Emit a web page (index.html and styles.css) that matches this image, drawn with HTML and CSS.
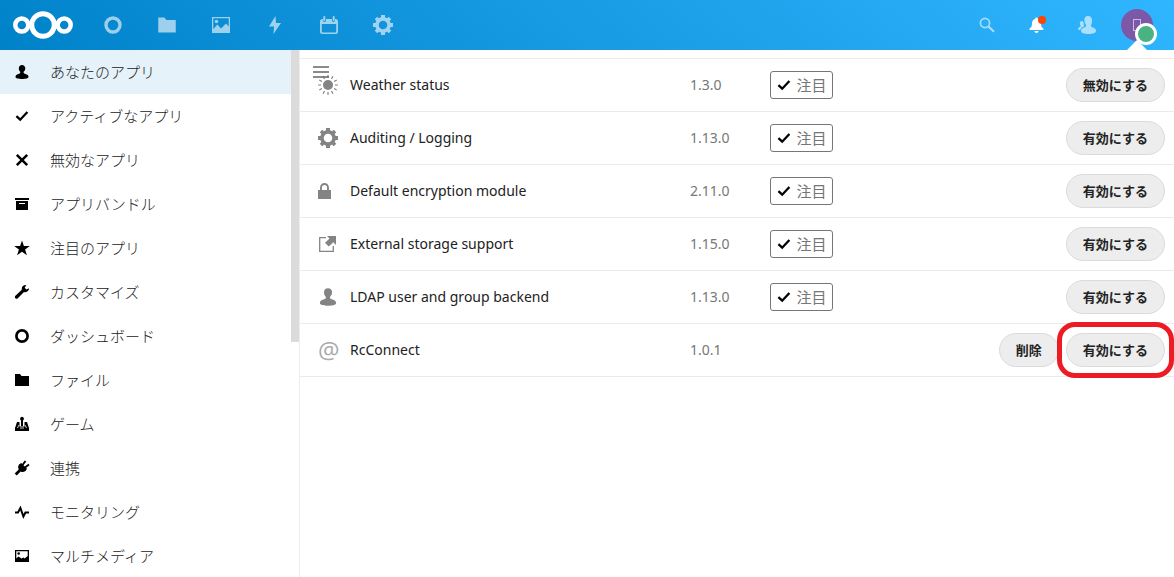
FILE: index.html
```html
<!DOCTYPE html>
<html lang="ja">
<head>
<meta charset="utf-8">
<title>アプリ</title>
<meta name="viewport" content="width=device-width, initial-scale=1">
<link rel="stylesheet" href="styles.css">
</head>
<body>
<svg class="sprite" aria-hidden="true">
  <symbol id="user" viewBox="0 0 16 16"><path d="M8 1C6.100 1 4.800 2.300 4.800 4.200c0 1.600.5 2.500 1.300 3.400.3.500.2 1.100.1 1.400-.3.500-1.400.8-2.500 1.200C2.300 10.700 1.500 11.500 1.500 13c0 1.300 3 2 6.500 2s6.500-.7 6.500-2c0-1.500-.8-2.300-2.300-2.800-1.100-.4-2.200-.7-2.500-1.200-.1-.3-.2-.9.1-1.400.8-.9 1.500-1.800 1.500-3.400C11.200 2.300 9.900 1 8 1z"/></symbol>
  <symbol id="check" viewBox="0 0 16 16"><path d="M2.400 8.200 6.200 11.700 13.400 4" fill="none" stroke="currentColor" stroke-width="2.300"/></symbol>
  <symbol id="close" viewBox="0 0 16 16"><path d="M2.800 2.800 13.200 13.200M13.200 2.800 2.800 13.200" fill="none" stroke="currentColor" stroke-width="2.500"/></symbol>
  <symbol id="bundle" viewBox="0 0 16 16"><path fill-rule="evenodd" d="M1 2h14v2H1zM2 5h12v9H2zM5 7v1h6V7z"/></symbol>
  <symbol id="star" viewBox="0 0 16 16"><path d="M8 .5 9.900 6h5.900l-4.700 3.500 1.800 5.700L8 11.700l-4.900 3.500 1.800-5.700L.2 6h5.900z"/></symbol>
  <symbol id="wrench" viewBox="0 0 16 16"><path d="M12.300 1C9.400.8 7.200 3 7.800 5.800L1.400 11.800c-1.600 1.600.8 4.100 2.400 2.500l6.200-6.300c2.600.8 5.200-1 5.100-3.800l-2.600 1.300-1.800-1.700z"/></symbol>
  <symbol id="ring" viewBox="0 0 16 16"><circle cx="8" cy="8" r="5.600" fill="none" stroke="currentColor" stroke-width="2.700"/></symbol>
  <symbol id="folder" viewBox="0 0 16 16"><path d="M1 2h5l1.500 2H15v10H1z"/></symbol>
  <symbol id="game" viewBox="0 0 16 16"><path d="M8 .8a2 2 0 0 0-1 3.700V10h2V4.500A2 2 0 0 0 8 .8zM3 6h2.500v4.500h5V6H13l2 6v3H1v-3z"/><path d="M3.500 12 5 9M12.500 12 11 9M6 12h4" fill="none" stroke="#fff" stroke-width=".8"/></symbol>
  <symbol id="plug" viewBox="0 0 16 16"><path d="M5 4.500 7.200 3l5.800 5.800-1.500 2.200c-1.700 1.200-3.300 1.400-4.800.5l-4 4-2-2 4-4C3.900 7.500 4 6 5 4.500z"/><path d="M8.500 5l3-4M11 7.500l4-3" stroke="currentColor" stroke-width="1.900"/></symbol>
  <symbol id="pulse" viewBox="0 0 16 16"><path d="M1 8.500h3L6.400 4l3 8.500 2-4H15" fill="none" stroke="currentColor" stroke-width="2"/></symbol>
  <symbol id="picture" viewBox="0 0 16 16"><path fill-rule="evenodd" d="M1 2h14v12H1zM2.300 3.300v7.200l2-2 3.300 2 2-1 1 1L13.700 8V3.300z"/><circle cx="4.700" cy="5.500" r="1.300"/></symbol>
  <symbol id="photo" viewBox="0 0 18 16"><path fill-rule="evenodd" d="M0 0h18v16H0zM1.300 1.300v11l4-4.800L9 11.500l5-5 2.700 3V1.300z"/><circle cx="4.500" cy="4.500" r="1.800"/></symbol>
  <symbol id="bolt" viewBox="0 0 16 20"><path d="M8.500 1 2 11.500h5L6.500 19 14 8H9z"/></symbol>
  <symbol id="calendar" viewBox="0 0 18 18"><path fill-rule="evenodd" d="M2.500 3H3v2q1.300 2 3 0V3h6v2q1.300 2 3 0V3h.5Q18 3 18 5.500v10q0 2.500-2.500 2.500h-13Q0 18 0 15.500v-10Q0 3 2.500 3zM1.800 8v7.500q0 1 1 1h12.400q1 0 1-1V8z"/><rect x="3.300" width="2" height="5" rx="1"/><rect x="12.700" width="2" height="5" rx="1"/></symbol>
  <symbol id="gear" viewBox="0 0 20 20"><circle cx="10" cy="10" r="6.100" fill="none" stroke="currentColor" stroke-width="3.600"/><path d="M8 0h4v3H8zM8 17h4v3H8zM0 8h3v4H0zM17 8h3v4h-3zM4.300 1.700 6.300 3.700 3.700 6.300 1.700 4.300zM15.700 1.700 18.300 4.300 16.300 6.300 13.700 3.700zM1.700 15.700 3.700 13.700 6.300 16.300 4.300 18.300zM18.300 15.700 16.300 13.700 13.700 16.300 15.700 18.300z"/></symbol>
  <symbol id="search" viewBox="0 0 16 16"><circle cx="6" cy="6" r="4.600" fill="none" stroke="currentColor" stroke-width="1.700"/><path d="m9.500 9.500 5.500 5.200" stroke="currentColor" stroke-width="2.200"/></symbol>
  <symbol id="bell" viewBox="0 0 16 16"><path d="M7.500.5c-.8 0-1.200.5-1.200 1.300C4 2.600 3 4.400 3 6.500c0 3-.8 4.100-2.500 5.200V13h14v-1.300C12.800 10.600 12 9.500 12 6.500c0-2.100-1-3.900-3.300-4.700 0-.8-.4-1.300-1.200-1.300zM5.300 14q.5 2 2.200 2t2.200-2z"/></symbol>
  <symbol id="contacts" viewBox="0 0 18 18"><path d="M10 0C7.700 0 6.400 1.500 6.400 4c0 2 .5 3.300 1.400 4.400.7 2-.2 2.500-1.600 3-1.900.6-3.200 1.500-3.200 3.600C3 16.700 6 18 10.500 18s7.500-1.300 7.500-3c0-2.100-1.300-3-3.200-3.600-1.400-.5-2.300-1-1.600-3C14 7.300 14 6 14 4c0-2.500-1.700-4-4-4z"/><path d="M3.700 5C2.400 5 1.800 6 1.800 7.300c0 1.500.8 2 .8 3C2.600 11.300 0 11.200 0 13c0 .8 1 1 2.300 1 .8-2.300 2-3 4-3.500-.8-1-.6-1.600-.4-2.200C6.100 6.300 5 5 3.700 5z"/></symbol>
  <symbol id="weather" viewBox="0 0 20 20"><circle cx="10" cy="10" r="5"/><path d="M10 0v3M10 17v3M0 10h3M17 10h3M5 1.300l1.500 2.600M13.500 16.100l1.500 2.600M1.300 5l2.600 1.500M16.100 13.500l2.600 1.500M15 1.300l-1.500 2.600M6.500 16.100 5 18.700M18.700 5l-2.600 1.500M3.900 13.500 1.300 15" stroke="currentColor" stroke-width="1.200"/></symbol>
  <symbol id="lock" viewBox="0 0 18 18"><path d="M3 9V5.500a3.500 3.500 0 0 1 7 0V9" fill="none" stroke="currentColor" stroke-width="1.900"/><path d="M0 8h13v9H0z"/></symbol>
  <symbol id="external" viewBox="0 0 18 18"><path d="M8 2.700H1.700v13.600h13.600V11" fill="none" stroke="currentColor" stroke-width="1.300"/><path d="M9 1h9v9l-2.700-2.700-4.600 4.200-3.700-3.700L11.500 3.500z"/></symbol>
</svg>

<header class="header">
  <nav class="apps" aria-label="アプリ">
    <a class="logo" href="#" aria-label="ホーム"><svg viewBox="0 0 60 28"><g fill="none" stroke="#fff"><circle cx="30" cy="14" r="11.300" stroke-width="5"/><circle cx="8.800" cy="14" r="6.500" stroke-width="4.500"/><circle cx="51.200" cy="14" r="6.500" stroke-width="4.500"/></g></svg></a>
    <a class="app" href="#" aria-label="ダッシュボード"><svg class="i20"><use href="#ring"/></svg></a>
    <a class="app" href="#" aria-label="ファイル"><svg class="i20"><use href="#folder"/></svg></a>
    <a class="app" href="#" aria-label="写真"><svg class="i18"><use href="#photo"/></svg></a>
    <a class="app" href="#" aria-label="アクティビティ"><svg class="i20"><use href="#bolt"/></svg></a>
    <a class="app" href="#" aria-label="カレンダー"><svg class="i18"><use href="#calendar"/></svg></a>
    <a class="app" href="#" aria-label="設定"><svg class="i20"><use href="#gear"/></svg></a>
  </nav>
  <div class="tools">
    <button class="tool dim" aria-label="検索"><svg class="i16"><use href="#search"/></svg></button>
    <button class="tool" aria-label="通知"><svg class="i16"><use href="#bell"/></svg><span class="badge"></span></button>
    <button class="tool dim" aria-label="連絡先"><svg class="i18"><use href="#contacts"/></svg></button>
    <button class="tool" aria-label="ユーザー"><span class="avatar"><span class="initial"></span></span><span class="caret"></span><span class="status"></span></button>
  </div>
</header>

<div class="content">
  <aside class="sidebar">
    <nav class="menu" aria-label="カテゴリ">
      <a class="item active" href="#"><svg class="i16"><use href="#user"/></svg>あなたのアプリ</a>
      <a class="item" href="#"><svg class="i16"><use href="#check"/></svg>アクティブなアプリ</a>
      <a class="item" href="#"><svg class="i16"><use href="#close"/></svg>無効なアプリ</a>
      <a class="item" href="#"><svg class="i16"><use href="#bundle"/></svg>アプリバンドル</a>
      <a class="item" href="#"><svg class="i16"><use href="#star"/></svg>注目のアプリ</a>
      <a class="item" href="#"><svg class="i16"><use href="#wrench"/></svg>カスタマイズ</a>
      <a class="item" href="#"><svg class="i16"><use href="#ring"/></svg>ダッシュボード</a>
      <a class="item" href="#"><svg class="i16"><use href="#folder"/></svg>ファイル</a>
      <a class="item" href="#"><svg class="i16"><use href="#game"/></svg>ゲーム</a>
      <a class="item" href="#"><svg class="i16"><use href="#plug"/></svg>連携</a>
      <a class="item" href="#"><svg class="i16"><use href="#pulse"/></svg>モニタリング</a>
      <a class="item" href="#"><svg class="i16"><use href="#picture"/></svg>マルチメディア</a>
    </nav>
    <div class="track"><div class="thumb"></div></div>
  </aside>
  <main class="main">
    <button class="toggle" aria-label="メニュー"><svg viewBox="0 0 16 12"><path d="M0 1h16M0 6h16M0 11h16" stroke="#666" stroke-width="1.500"/></svg></button>
    <table class="list">
      <tbody>
      <tr><td class="icon"><svg class="i20"><use href="#weather"/></svg></td><td class="name">Weather status</td><td class="version">1.3.0</td><td><span class="tag"><svg class="i16"><use href="#check"/></svg>注目</span></td><td class="actions"><button class="btn">無効にする</button></td></tr>
      <tr><td class="icon"><svg class="i20"><use href="#gear"/></svg></td><td class="name">Auditing / Logging</td><td class="version">1.13.0</td><td><span class="tag"><svg class="i16"><use href="#check"/></svg>注目</span></td><td class="actions"><button class="btn">有効にする</button></td></tr>
      <tr><td class="icon"><svg class="i18"><use href="#lock"/></svg></td><td class="name">Default encryption module</td><td class="version">2.11.0</td><td><span class="tag"><svg class="i16"><use href="#check"/></svg>注目</span></td><td class="actions"><button class="btn">有効にする</button></td></tr>
      <tr><td class="icon"><svg class="i18"><use href="#external"/></svg></td><td class="name">External storage support</td><td class="version">1.15.0</td><td><span class="tag"><svg class="i16"><use href="#check"/></svg>注目</span></td><td class="actions"><button class="btn">有効にする</button></td></tr>
      <tr><td class="icon"><svg class="i20"><use href="#user"/></svg></td><td class="name">LDAP user and group backend</td><td class="version">1.13.0</td><td><span class="tag"><svg class="i16"><use href="#check"/></svg>注目</span></td><td class="actions"><button class="btn">有効にする</button></td></tr>
      <tr><td class="icon at">@</td><td class="name">RcConnect</td><td class="version">1.0.1</td><td></td><td class="actions"><button class="btn">削除</button><span class="marked"><button class="btn">有効にする</button></span></td></tr>
      </tbody>
    </table>
  </main>
</div>
</body>
</html>
```
FILE: styles.css
```css
* { box-sizing: border-box; }

body {
  margin: 0;
  height: 100vh;
  overflow: hidden;
  display: flex;
  flex-direction: column;
  background: #fff;
  color: #222;
  font: 15px/24px "Noto Sans", "Noto Sans CJK JP", sans-serif;
}

a { color: inherit; text-decoration: none; }
button { font: inherit; cursor: pointer; }
svg { display: block; fill: currentColor; }

.sprite { position: absolute; width: 0; height: 0; }
.i16 { width: 16px; height: 16px; }
.i18 { width: 18px; height: 18px; }
.i20 { width: 20px; height: 20px; }

.header {
  flex: none;
  height: 50px;
  display: flex;
  justify-content: space-between;
  background: #0082c9 linear-gradient(40deg, #0082c9 0%, #30b6ff 100%);
  color: #fff;
}
.apps, .tools { display: flex; }
.tools { padding-right: 12px; }
.logo {
  width: 86px;
  padding: 11px 13px;
}
.logo svg { width: 60px; height: 28px; }
.app {
  width: 54px;
  display: grid;
  place-items: center;
  opacity: .6;
}
.tool {
  position: relative;
  width: 50px;
  padding: 0;
  border: 0;
  background: none;
  color: #fff;
  display: grid;
  place-items: center;
}
.dim svg { opacity: .6; }
.badge {
  position: absolute;
  top: 16px;
  left: 26px;
  width: 8px;
  height: 8px;
  border-radius: 50%;
  background: #ff4402;
}
.avatar {
  width: 32px;
  height: 32px;
  border-radius: 50%;
  background: #7b59a8;
  display: grid;
  place-items: center;
}
.initial {
  width: 8px;
  height: 12px;
  border: 1px solid #cbbcdd;
}
.caret {
  position: absolute;
  left: 15px;
  bottom: 0;
  border: 10px solid transparent;
  border-top: 0;
  border-bottom-color: #fff;
}
.status {
  position: absolute;
  left: 23px;
  top: 23px;
  width: 22px;
  height: 22px;
  border: 3px solid #fff;
  border-radius: 50%;
  background: #49b382;
}

.content {
  flex: 1;
  min-height: 0;
  display: flex;
}
.sidebar {
  flex: none;
  width: 300px;
  display: flex;
  overflow: hidden;
  border-right: 1px solid #ededed;
}
.menu { flex: 1; font-weight: 300; }
.item {
  height: 44px;
  padding-left: 14px;
  display: flex;
  align-items: center;
  gap: 20px;
}
.item svg { color: #000; }
.active { background: #e5f2fa; }
.track { width: 8px; }
.thumb { height: 55.5%; background: #dbdbdb; }

.main {
  flex: 1;
  min-width: 0;
  position: relative;
  padding-top: 8px;
}
.toggle {
  position: absolute;
  left: 13px;
  top: 16px;
  padding: 0;
  border: 0;
  background: none;
}
.toggle svg { width: 16px; height: 12px; }

.list {
  width: 100%;
  border-collapse: collapse;
  border-top: 1px solid #ebebeb;
}
td {
  height: 53px;
  padding: 0;
  border-bottom: 1px solid #ebebeb;
}
.icon { width: 50px; padding-left: 18px; color: #848484; }
.at { font-family: "Open Sans", sans-serif; font-size: 24px; color: #aaa; }
.name { width: 340px; font-size: 14px; }
.version { width: 80px; font-size: 14px; color: #777; }
.tag {
  width: 63px;
  height: 28px;
  display: flex;
  align-items: center;
  justify-content: center;
  gap: 4px;
  border: 1px solid #767676;
  border-radius: 3px;
  color: #767676;
}
.tag svg { color: #000; }
.actions {
  padding-right: 9px;
  text-align: right;
  white-space: nowrap;
}
.btn {
  height: 34px;
  padding: 0 16px;
  border: 1px solid #dbdbdb;
  border-radius: 17px;
  background: #ededed;
  color: #222;
  font-size: 13px;
  line-height: 20px;
  font-weight: 700;
}
.marked {
  position: relative;
  display: inline-block;
  margin-left: 7px;
}
.marked::after {
  content: "";
  position: absolute;
  inset: -11px -9px;
  border: 5px solid #ed1c24;
  border-radius: 18px;
  pointer-events: none;
}
```
